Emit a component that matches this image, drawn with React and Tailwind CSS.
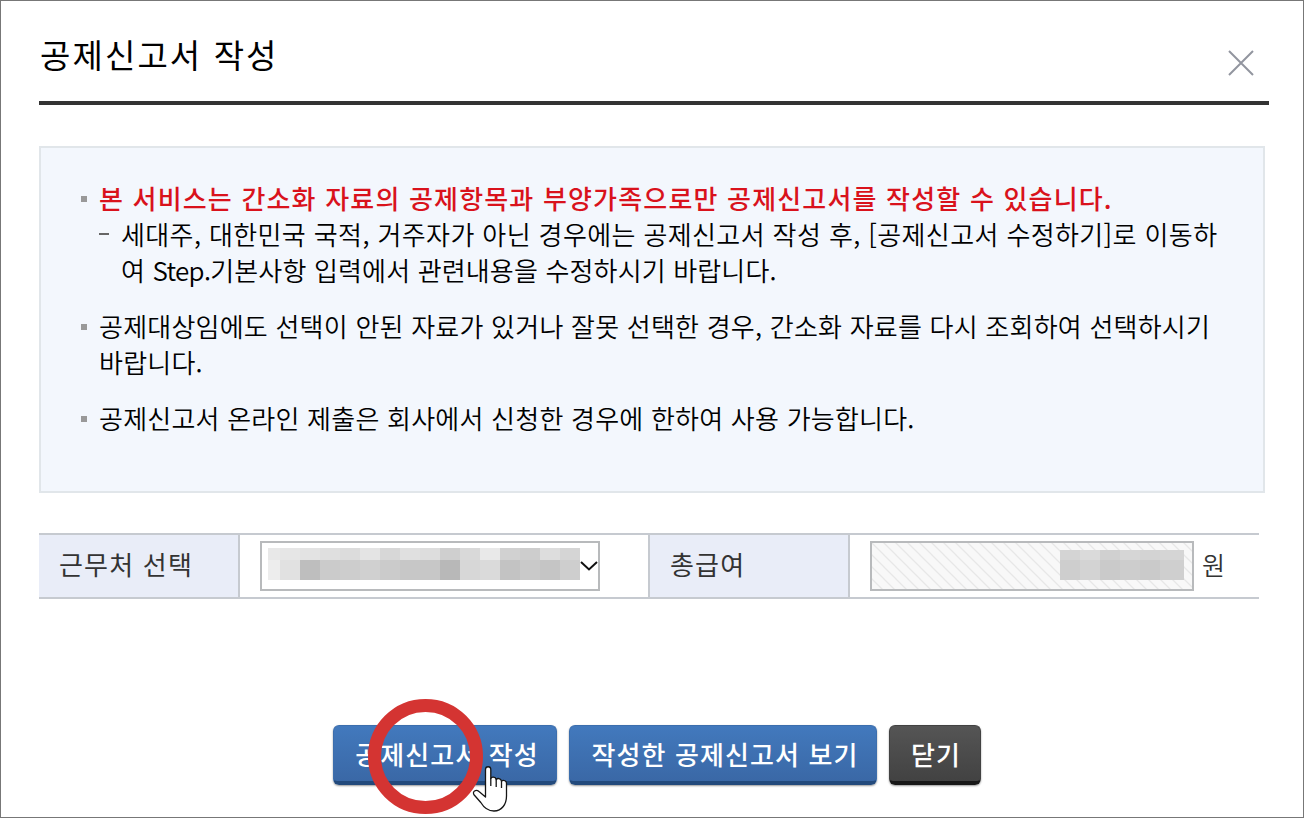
import React from "react";

const topCells = [
    "bg-[#e8e8e8]",
    "bg-[#e6e6e6]",
    "bg-[#e3e3e3]",
    "bg-[#dfdfdf]",
    "bg-[#dcdcdc]",
    "bg-[#e4e4e4]",
    "bg-[#d7d7d7]",
    "bg-[#e0e0e0]",
    "bg-[#dddddd]",
    "bg-[#cfcfcf]",
    "bg-[#d9d9d9]",
    "bg-[#e9e9e9]",
    "bg-[#d1d1d1]",
    "bg-[#cdcdcd]",
    "bg-[#dddddd]",
    "bg-[#d5d5d5]",
];

const bottomCells = [
    "bg-[#ededed]",
    "bg-[#e1e1e1]",
    "bg-[#bebebe]",
    "bg-[#cbcbcb]",
    "bg-[#cdcdcd]",
    "bg-[#d0d0d0]",
    "bg-[#cbcbcb]",
    "bg-[#c7c7c7]",
    "bg-[#c7c7c7]",
    "bg-[#b8b8b8]",
    "bg-[#d7d7d7]",
    "bg-[#dadada]",
    "bg-[#c3c3c3]",
    "bg-[#c9c9c9]",
    "bg-[#c5c5c5]",
    "bg-[#cecece]",
];

const amountTop = [
    "bg-[#d4d4d4]",
    "bg-[#dadada]",
    "bg-[#d0d0d0]",
    "bg-[#d6d6d6]",
    "bg-[#d3d3d3]",
    "bg-[#d5d5d5]",
];

const amountBottom = [
    "bg-[#cecece]",
    "bg-[#d3d3d3]",
    "bg-[#cacaca]",
    "bg-[#cdcdcd]",
    "bg-[#cacaca]",
    "bg-[#cfcfcf]",
];

const Bullet = () => <span className="mt-4 size-[6px] shrink-0 bg-[#999]" />;

const HiddenWorkplace = () => (
    <div className="w-[312px]">
        <div className="flex h-3">
            {topCells.map((color, i) => (
                <span key={i} className={`${color} w-5 first:w-3`} />
            ))}
        </div>
        <div className="flex h-5">
            {bottomCells.map((color, i) => (
                <span key={i} className={`${color} w-5 first:w-3`} />
            ))}
        </div>
    </div>
);

const HiddenAmount = () => (
    <div className="w-[124px]">
        <div className="flex h-[10px]">
            {amountTop.map((color, i) => (
                <span key={i} className={`${color} w-5 last:w-6`} />
            ))}
        </div>
        <div className="flex h-5">
            {amountBottom.map((color, i) => (
                <span key={i} className={`${color} w-5 last:w-6`} />
            ))}
        </div>
    </div>
);

const Hatch = () => (
    <svg className="absolute inset-0" width="320" height="46">
        <defs>
            <pattern id="hatch" width="12" height="12" patternUnits="userSpaceOnUse">
                <path d="M-2 -2L14 14M-2 10L2 14M10 -2L14 2" stroke="#e7e7e7" strokeWidth="1.3" />
            </pattern>
        </defs>
        <rect width="320" height="46" fill="#f8f8f8" />
        <rect width="320" height="46" fill="url(#hatch)" />
    </svg>
);

const Notice = () => (
    <ul className="mt-[41px] h-[347px] w-[1226px] border-2 border-[#e1e6ea] bg-[#f3f7fd] pt-8 pl-10 text-[26px] leading-9 font-[350] tracking-[0.22px] whitespace-nowrap text-black">
        <li className="flex gap-3">
            <Bullet />
            <div>
                <p className="font-medium tracking-[1.18px] text-[#d9121c]">
                    본 서비스는 간소화 자료의 공제항목과 부양가족으로만 공제신고서를 작성할 수 있습니다.
                </p>
                <div className="flex gap-3">
                    <span className="mt-[17px] h-[2px] w-[10px] bg-[#666]" />
                    <p>
                        <span className="tracking-[0.38px]">
                            세대주, 대한민국 국적, 거주자가 아닌 경우에는 공제신고서 작성 후, [공제신고서 수정하기]로 이동하
                        </span>
                        <br />
                        <span className="tracking-[0.15px]">
                            여 <span className="tracking-[-0.7px]">Step.</span>기본사항 입력에서 관련내용을 수정하시기 바랍니다.
                        </span>
                    </p>
                </div>
            </div>
        </li>
        <li className="mt-5 flex gap-3">
            <Bullet />
            <p>
                공제대상임에도 선택이 안된 자료가 있거나 잘못 선택한 경우, 간소화 자료를 다시 조회하여 선택하시기
                <br />
                바랍니다.
            </p>
        </li>
        <li className="mt-5 flex gap-3">
            <Bullet />
            <p>공제신고서 온라인 제출은 회사에서 신청한 경우에 한하여 사용 가능합니다.</p>
        </li>
    </ul>
);

const WorkplaceRow = () => (
    <div className="mt-10 flex h-[66px] w-[1220px] border-y-2 border-[#c6cad0] text-[26px] leading-9 tracking-[1.2px] text-[#333]">
        <div className="flex w-[201px] items-center border-r-2 border-[#c6cad0] bg-[#e9edf8] pb-1 pl-5">
            근무처 선택
        </div>
        <div className="flex w-[408px] items-center pl-5">
            <button className="flex h-[50px] w-[340px] items-start border-2 border-[#b8babc] bg-white pt-[5px] pl-[6px]">
                <HiddenWorkplace />
                <svg className="mt-[10px]" width="18" height="16" viewBox="0 0 18 16" fill="none">
                    <path d="M1 4L9 11.500L17 4" stroke="#111" strokeWidth="2" />
                </svg>
            </button>
        </div>
        <div className="flex w-[202px] items-center border-x-2 border-[#c6cad0] bg-[#e9edf8] pb-1 pl-5">
            총급여
        </div>
        <div className="flex flex-1 items-center gap-2 pl-5">
            <div className="relative flex h-[50px] w-[324px] justify-end border-2 border-[#b8babc] pt-[7px] pr-2">
                <Hatch />
                <div className="relative">
                    <HiddenAmount />
                </div>
            </div>
            <span className="pb-1 text-[25px] font-[350]">원</span>
        </div>
    </div>
);

const blueButton =
    "h-[60px] rounded-md border border-b-4 border-[#3c6ead] border-b-[#234a7c] bg-gradient-to-b from-[#4279bd] to-[#3a68a6] pl-1 shadow-[0_1px_2px_rgba(0,0,0,0.4)]";

const Pointer = () => (
    <svg className="absolute top-[39px] left-[139px]" width="38" height="50" viewBox="0 0 38 50">
        <path
            d="M13.500 5.500C13.500 1.800 18.800 1.800 18.800 5.500V14.500C19.500 12.500 23.500 12.700 24.200 15.500C25.500 13.800 28.800 14.300 29.500 17C32 15.500 34.500 17 34.500 19.500V32C34.500 40 30 47 22 47C15 47 11.500 43 8.800 38.500L2.200 31C-0.300 27.500 4 24.800 7 27.500L13.500 33Z"
            fill="white"
            stroke="#151515"
            strokeWidth="1.3"
            strokeLinejoin="round"
        />
        <path d="M18.800 14V22M24.200 15.500V23M29.500 17V24" stroke="#151515" strokeWidth="1.3" fill="none" />
    </svg>
);

const App = () => {
    return (
        <div
            lang="ko"
            className="h-[818px] w-[1304px] overflow-hidden border border-[#777] bg-white pl-[38px] font-['Noto_Sans_CJK_KR',sans-serif]"
        >
            <header className="flex h-[104px] w-[1230px] justify-between border-b-4 border-[#333]">
                <h1 className="mt-[30px] pl-px text-[33px] leading-[46px] tracking-[2.1px] text-black">
                    공제신고서 작성
                </h1>
                <button className="mt-[49px] mr-[15px] h-[26px]" aria-label="닫기">
                    <svg width="26" height="26" viewBox="0 0 26 26" fill="none">
                        <path d="M1 1L25 25M25 1L1 25" stroke="#92959f" strokeWidth="2" />
                    </svg>
                </button>
            </header>

            <Notice />
            <WorkplaceRow />

            <div className="mt-[126px] ml-[294px] flex gap-3 text-[26px] leading-9 font-medium tracking-[1.1px] whitespace-nowrap text-white">
                <div className="relative">
                    <button className={`${blueButton} w-[224px]`}>공제신고서 작성</button>
                    <span className="absolute -top-[26px] left-[35px] size-[115px] rounded-full border-[13px] border-[#d43432]" />
                    <Pointer />
                </div>
                <button className={`${blueButton} w-[308px]`}>작성한 공제신고서 보기</button>
                <button className="h-[60px] w-[92px] rounded-md border border-b-4 border-[#424242] border-b-[#181818] bg-gradient-to-b from-[#555] to-[#424242] pl-[2px] shadow-[0_1px_2px_rgba(0,0,0,0.4)]">
                    닫기
                </button>
            </div>
        </div>
    );
};

export default App;
